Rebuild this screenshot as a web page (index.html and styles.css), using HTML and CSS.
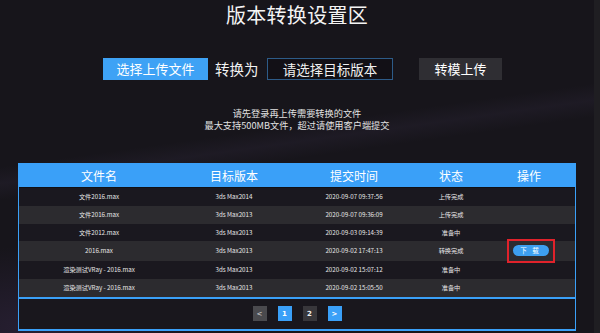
FILE: index.html
```html
<!DOCTYPE html>
<html lang="zh-CN">
<head>
<meta charset="utf-8">
<title>版本转换设置区</title>
<link rel="stylesheet" href="styles.css">
</head>
<body>
<div class="page">
  <main class="main">
    <h1 class="title">版本转换设置区</h1>
    <div class="actions">
      <button class="btn btn-primary">选择上传文件</button>
      <span class="label">转换为</span>
      <div class="select">请选择目标版本</div>
      <button class="btn btn-dark">转模上传</button>
    </div>
    <div class="notice">
      <p class="notice-line">请先登录再上传需要转换的文件</p>
      <p class="notice-line">最大支持500MB文件，超过请使用客户端提交</p>
    </div>
    <section class="table-box">
      <div class="row thead">
        <div class="c1">文件名</div>
        <div class="c2">目标版本</div>
        <div class="c3">提交时间</div>
        <div class="c4">状态</div>
        <div class="c5">操作</div>
      </div>
      <div class="row odd">
        <div class="c1">文件2016.max</div>
        <div class="c2">3ds Max2014</div>
        <div class="c3">2020-09-07 09:37:56</div>
        <div class="c4">上传完成</div>
        <div class="c5"></div>
      </div>
      <div class="row even">
        <div class="c1">文件2016.max</div>
        <div class="c2">3ds Max2013</div>
        <div class="c3">2020-09-07 09:36:09</div>
        <div class="c4">上传完成</div>
        <div class="c5"></div>
      </div>
      <div class="row odd short">
        <div class="c1">文件2012.max</div>
        <div class="c2">3ds Max2013</div>
        <div class="c3">2020-09-03 09:14:39</div>
        <div class="c4">准备中</div>
        <div class="c5"></div>
      </div>
      <div class="row even tall">
        <div class="c1">2016.max</div>
        <div class="c2">3ds Max2013</div>
        <div class="c3">2020-09-02 17:47:13</div>
        <div class="c4">转换完成</div>
        <div class="c5"><span class="mark"><button class="dl">下 载</button></span></div>
      </div>
      <div class="row odd">
        <div class="c1">渲染测试VRay - 2016.max</div>
        <div class="c2">3ds Max2013</div>
        <div class="c3">2020-09-02 15:07:12</div>
        <div class="c4">准备中</div>
        <div class="c5"></div>
      </div>
      <div class="row even">
        <div class="c1">渲染测试VRay - 2016.max</div>
        <div class="c2">3ds Max2013</div>
        <div class="c3">2020-09-02 15:05:50</div>
        <div class="c4">准备中</div>
        <div class="c5"></div>
      </div>
      <div class="pager">
        <span class="pg pg-prev">&lt;</span>
        <span class="pg pg-on">1</span>
        <span class="pg">2</span>
        <span class="pg pg-next">&gt;</span>
      </div>
    </section>
  </main>
  <div class="strip"></div>
</div>
</body>
</html>
```
FILE: styles.css
```css
* { box-sizing: border-box; }
html, body { margin: 0; padding: 0; }
body {
  width: 600px;
  height: 333px;
  overflow: hidden;
  background: #17151b;
  font-family: "Noto Sans CJK SC", "Noto Sans", sans-serif;
  color: #fff;
}
.page {
  display: flex;
  width: 600px;
  height: 333px;
  background:
    radial-gradient(ellipse 260px 120px at 40px 330px, rgba(70, 50, 95, 0.35), rgba(0,0,0,0) 70%),
    linear-gradient(172deg, rgba(0,0,0,0) 40%, rgba(90, 75, 120, 0.10) 44%, rgba(0,0,0,0) 48%),
    #17151b;
}
.main {
  width: 594px;
  display: flex;
  flex-direction: column;
  align-items: stretch;
}
.strip {
  width: 6px;
  background: #1f1e22;
}
.title {
  margin: 3px 0 0;
  font-size: 20px;
  line-height: 24px;
  font-weight: 400;
  text-align: center;
  color: #f4f4f4;
  letter-spacing: 0.3px;
}
.actions {
  margin-top: 31px;
  padding-left: 103px;
  display: flex;
  align-items: center;
  height: 22px;
}
.btn {
  height: 22px;
  border: none;
  padding: 0;
  font-family: inherit;
  color: #fff;
  font-size: 13px;
  line-height: 22px;
}
.btn-primary {
  width: 105px;
  background: #3ea2f5;
}
.label {
  margin-left: 7px;
  width: 45px;
  font-size: 14.5px;
  line-height: 22px;
  color: #f2f2f2;
}
.select {
  margin-left: 7px;
  width: 126px;
  height: 22px;
  border: 1px solid #2d5b88;
  background: #121016;
  font-size: 13.5px;
  line-height: 20px;
  text-align: center;
  color: #f0f0f0;
}
.btn-dark {
  margin-left: 26px;
  width: 83px;
  background: #2f2e33;
}
.notice {
  margin-top: 28px;
  display: flex;
  flex-direction: column;
  align-items: center;
  gap: 0.5px;
}
.notice-line {
  margin: 0;
  font-size: 9.2px;
  line-height: 11px;
  height: 11px;
  text-align: center;
  color: #e2e2e2;
}
.table-box {
  margin: 32px 18px 0;
  border: 1px solid #3aa0f8;
  border-bottom-width: 2px;
  background: #19171d;
}
.row {
  display: flex;
  align-items: center;
  height: 18px;
  font-size: 6.2px;
  color: #e8e8e8;
}
.row > div { text-align: center; }
.c1 { width: 160px; }
.c2 { width: 110px; }
.c3 { width: 130px; }
.c4 { width: 64px; }
.c5 { width: 92px; display: flex; justify-content: center; }
.thead {
  height: 24px;
  background: #3aa0f8;
  border-bottom: 1px solid #101015;
  font-size: 12px;
  color: #fff;
}
.odd { background: #1a181f; }
.even { background: #2c2b2f; }
.short { height: 17px; }
.tall { height: 20px; }
.mark {
  display: inline-flex;
  align-items: center;
  justify-content: center;
  width: 48px;
  height: 24px;
  margin-left: 3px;
  border: 2px solid #e0222b;
}
.dl {
  width: 36px;
  height: 11px;
  padding: 0;
  border: none;
  border-radius: 6px;
  background: #3d9ff0;
  color: #fff;
  font-family: inherit;
  font-size: 6.5px;
  line-height: 11px;
  letter-spacing: 2px;
}
.pager {
  border-top: 2px solid #3aa0f8;
  height: 32px;
  display: flex;
  align-items: center;
  justify-content: center;
  gap: 11px;
}
.pg {
  width: 14px;
  height: 15px;
  display: flex;
  align-items: center;
  justify-content: center;
  background: #38373b;
  font-family: "DejaVu Sans", sans-serif;
  font-size: 7px;
  font-weight: 700;
  color: #f0f0f0;
}
.pg-prev { background: #4a4a4e; color: #bbb; }
.pg-on, .pg-next { background: #3aa0f8; color: #fff; }
```
